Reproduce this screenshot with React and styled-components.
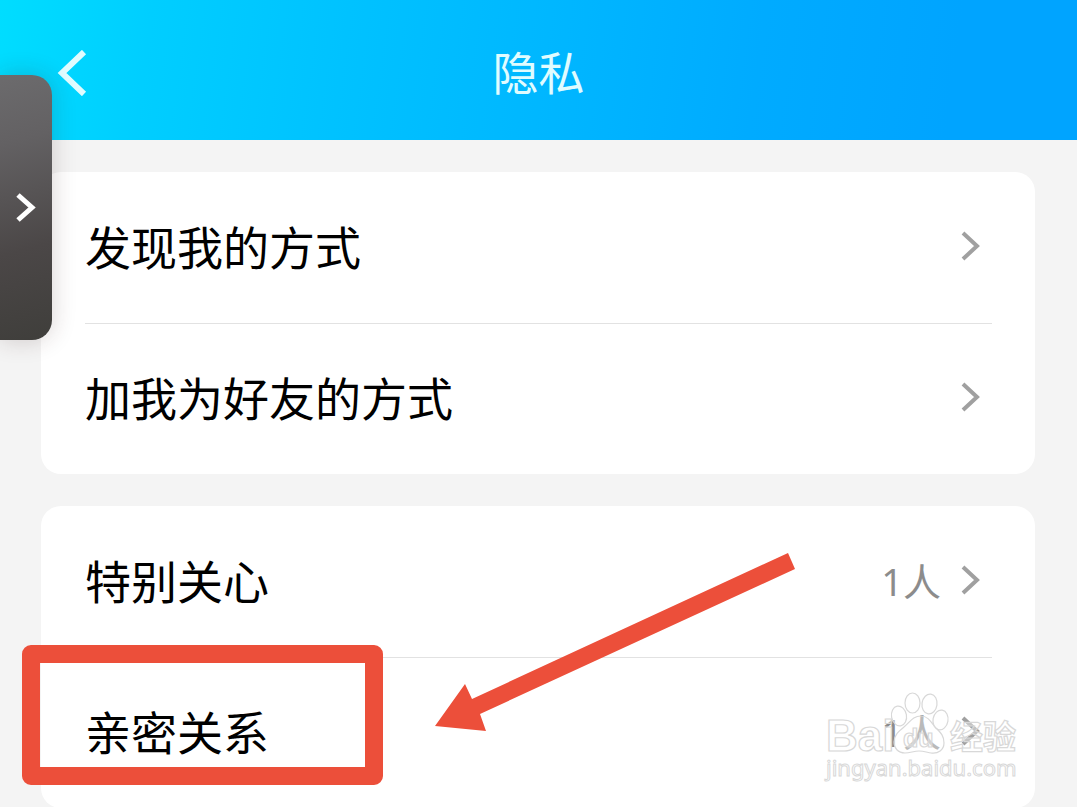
import React from 'react';
import styled, { createGlobalStyle } from 'styled-components';

const GlobalStyle = createGlobalStyle`
    * {
        box-sizing: border-box;
    }
    body {
        margin: 0;
        background: #F4F4F4;
        color: #000;
        font-family: "Noto Sans CJK SC", "Noto Sans", sans-serif;
    }
`;

const Page = styled.div`
    position: relative;
    overflow: hidden;
`;

const Header = styled.header`
    display: grid;
    grid-template-columns: 1fr auto 1fr;
    align-items: center;
    height: 140px;
    padding: 6px 56px 0;
    background: linear-gradient(98deg, #00DDFF 0%, #00CEFF 14%, #00C2FF 32%, #00B6FF 52%, #00ABFF 70%, #00A4FF 88%, #00A4FF 100%);
`;

const Title = styled.h1`
    margin: 0;
    padding-bottom: 6px;
    color: #E0FCFF;
    font-size: 46px;
    font-weight: 400;
    line-height: 64px;
`;

const IconButton = styled.button`
    display: flex;
    justify-self: start;
    padding: 0;
    border: 0;
    background: none;
    color: #E0FCFF;
    cursor: pointer;
`;

const Main = styled.main`
    display: flex;
    flex-direction: column;
    gap: 32px;
    padding: 32px 42px 0 41px;
`;

const Card = styled.ul`
    margin: 0;
    padding: 0 43px 0 44px;
    border-radius: 20px;
    background: #FFF;
    list-style: none;
`;

const Row = styled.li`
    position: relative;
    & + & {
        border-top: 1px solid #E2E2E2;
    }
`;

const RowLink = styled.a`
    display: flex;
    align-items: center;
    min-height: ${props => props.$divided ? 150 : 151}px;
    padding: 0 12px 6px 0;
    color: inherit;
    font-size: 46px;
    line-height: 64px;
    text-decoration: none;
`;

const Label = styled.span`
    flex: 1;
`;

const Count = styled.span`
    padding-top: 4px;
    margin-right: 20px;
    color: #8C8C8C;
    font-family: "Noto Sans", "Noto Sans CJK SC", sans-serif;
    font-size: 38px;
`;

const SideTab = styled.button`
    position: absolute;
    top: 75px;
    left: 0;
    display: flex;
    align-items: center;
    justify-content: center;
    width: 52px;
    height: 265px;
    padding: 0;
    border: 0;
    border-radius: 0 20px 20px 0;
    background: linear-gradient(165deg, #6C6B6D 0%, #636163 25%, #4B4747 65%, #3F3E3B 100%);
    box-shadow: 0 0 24px rgba(60, 30, 30, 0.2);
    color: #FFF;
    cursor: pointer;
`;

const Highlight = styled.div`
    position: absolute;
    top: -13px;
    left: -63px;
    width: 361px;
    height: 140px;
    border: 18px solid #EC4F3A;
    border-radius: 9px;
    pointer-events: none;
`;

const Arrow = styled.svg`
    position: absolute;
    top: -105px;
    left: 350px;
    pointer-events: none;
`;

const Watermark = styled.svg`
    position: absolute;
    top: 30px;
    right: -30px;
    pointer-events: none;
    fill: rgba(255, 255, 255, 0.4);
    stroke: #D8D8D8;
    stroke-width: 1.2;
    text {
        font-family: "Liberation Sans", "Noto Sans CJK SC", sans-serif;
        font-weight: 700;
    }
    .watermark__url {
        font-family: "Noto Sans", sans-serif;
        font-weight: 400;
        stroke-width: 1;
    }
`;

const Chevron = ({width, height, stroke, back}) => (
    <svg width={width} height={height} viewBox={`0 0 ${width} ${height}`} fill="none"
         stroke="currentColor" strokeWidth={stroke} aria-hidden="true">
        <path d={back
            ? `M${width - 3} 2 L${stroke} ${height / 2} L${width - 3} ${height - 2}`
            : `M2 2 L${width - stroke + 1} ${height / 2} L2 ${height - 2}`} />
    </svg>
);

const RowChevron = styled.span`
    display: flex;
    margin-top: 2px;
    color: #A0A0A0;
`;

const BaiduMark = () => (
    <Watermark width="200" height="100" viewBox="0 0 200 100" role="img" aria-label="Baidu 经验">
        <text x="4" y="63" fontSize="44">Bai</text>
        <ellipse cx="77" cy="28" rx="7.5" ry="10" transform="rotate(-10 77 28)" />
        <ellipse cx="90.5" cy="15" rx="7.5" ry="10" />
        <ellipse cx="107.5" cy="16" rx="7.5" ry="10" transform="rotate(8 107.5 16)" />
        <ellipse cx="118.5" cy="32" rx="7.5" ry="10" transform="rotate(10 118.5 32)" />
        <path d="M99 28 C106 28 109 34 113 39 C118 44 122 47 122 55 C122 62 116 66 109 65 C104 64 101 63 97 63 C92 63 88 65 83 65 C76 65 72 60 72 54 C72 47 77 43 82 39 C88 34 91 28 99 28 Z" />
        <text x="81" y="59" fontSize="25">du</text>
        <text x="128" y="61" fontSize="33">经验</text>
        <text className="watermark__url" x="4" y="88" fontSize="22">jingyan.baidu.com</text>
    </Watermark>
);

const groups = [
    [
        { label: '发现我的方式' },
        { label: '加我为好友的方式' }
    ],
    [
        { label: '特别关心', count: '1人' },
        { label: '亲密关系', count: '1人', marked: true }
    ]
];

const SettingRow = ({label, count, marked, divided}) => {
    return (
        <Row>
            <RowLink href="#" $divided={divided}>
                <Label>{label}</Label>
                {count && <Count>{count}</Count>}
                <RowChevron><Chevron width={19} height={30} stroke={4} /></RowChevron>
            </RowLink>
            {marked &&
                <>
                    <Highlight />
                    <Arrow width="360" height="178" viewBox="0 0 360 178" aria-hidden="true">
                        <path fill="#EC4F3A" d="M0 173 L30 131 L37 146 L353 0 L360 16 L45 161 L51 178 Z" />
                    </Arrow>
                    <BaiduMark />
                </>
            }
        </Row>
    );
}

export default function App() {
    return (
        <Page>
            <GlobalStyle />
            <Header>
                <IconButton type="button" aria-label="返回">
                    <Chevron width={31} height={46} stroke={6} back />
                </IconButton>
                <Title>隐私</Title>
            </Header>
            <Main>
                {groups.map((rows, i) => (
                    <Card key={i}>
                        {rows.map((row, j) => <SettingRow key={row.label} divided={j > 0} {...row} />)}
                    </Card>
                ))}
            </Main>
            <SideTab type="button" aria-label="展开">
                <Chevron width={20} height={29} stroke={5} />
            </SideTab>
        </Page>
    );
}
